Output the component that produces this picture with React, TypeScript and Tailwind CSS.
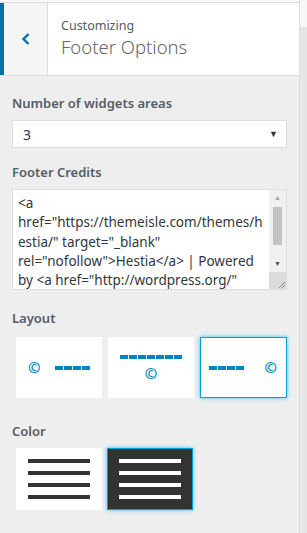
import React from 'react';

const font = { fontFamily: '"Segoe UI", "Noto Sans", "Open Sans", sans-serif' };

function Dashes({ count }: { count: number }) {
  return (
    <div className="flex gap-[1px]">
      {Array.from({ length: count }).map((_, i) => (
        <span key={i} className="block w-[8px] h-[4px] bg-[#0085ba]" />
      ))}
    </div>
  );
}

function Copy() {
  return <span className="text-[#0085ba] text-[15px] font-bold leading-none">©</span>;
}

function Bars({ light }: { light?: boolean }) {
  return (
    <div className="flex flex-col gap-[8px]">
      {[0, 1, 2, 3].map(i => (
        <span key={i} className={`block w-[62px] h-[4px] ${light ? 'bg-white' : 'bg-[#333]'}`} />
      ))}
    </div>
  );
}

const creditLines = [
  '<a',
  'href="https://themeisle.com/themes/h',
  'estia/" target="_blank"',
  'rel="nofollow">Hestia</a> | Powered',
  'by <a href="http://wordpress.org/"',
];

export default function App() {
  return (
    <div className="w-[307px] h-[533px] bg-[#eeeeee] flex overflow-hidden" style={font}>
      <div className="w-[299px] flex flex-col">
        {/* header */}
        <div className="h-[3px] bg-[#f9f9f9] border-b border-[#dddddd]" />
        <div className="h-[73px] flex border-b border-[#dddddd]">
          <div className="w-[4px] bg-[#0073aa]" />
          <div className="w-[44px] bg-[#f5f5f5] border-r border-[#dddddd] flex items-center justify-center">
            <svg width="10" height="14" viewBox="0 0 10 14">
              <path d="M7.5 2 L2.5 7 L7.5 12" fill="none" stroke="#0073aa" strokeWidth="2.4" />
            </svg>
          </div>
          <div className="flex-1 bg-white pl-[13px] pt-[15px]">
            <div className="text-[12.5px] leading-[16px] text-[#555d66]">Customizing</div>
            <div className="text-[18.5px] leading-[26px] font-light text-[#666]">Footer Options</div>
          </div>
        </div>

        <div className="px-[12px] pt-[17px]">
          <div className="text-[13px] font-semibold text-[#555d66] leading-[20px]">Number of widgets areas</div>
          <div className="mt-[7px] w-[275px] h-[28px] bg-white border border-[#dddddd] flex items-center justify-between pl-[10px] pr-[8px]">
            <span className="text-[14px] text-[#32373c]">3</span>
            <span className="text-[9px] text-[#333]">▼</span>
          </div>

          <div className="mt-[14px] text-[13px] font-semibold text-[#555d66] leading-[20px]">Footer Credits</div>
          <div className="mt-[7px] w-[275px] h-[101px] bg-white border border-[#dddddd] flex overflow-hidden">
            <div className="flex-1 pl-[5px] pt-[4px] text-[13.5px] leading-[19.3px] text-[#32373c] overflow-hidden">
              {creditLines.map((l, i) => (
                <div key={i} className="whitespace-pre">{l}</div>
              ))}
            </div>
            <div className="w-[17px] bg-[#f0f0f0] flex flex-col items-center">
              <span className="text-[7px] text-[#a3a3a3] mt-[4px] leading-none">▲</span>
              <span className="block w-[9px] h-[38px] bg-[#c1c1c1] mt-[6px]" />
              <span className="text-[7px] text-[#505050] mt-[15px] leading-none">▼</span>
              <span className="mt-auto w-[17px] h-[17px] bg-[#dcdcdc] flex items-end justify-end">
                <svg width="10" height="10" viewBox="0 0 10 10">
                  <path d="M9 3 L3 9 M9 6 L6 9" stroke="#808080" strokeWidth="1" />
                </svg>
              </span>
            </div>
          </div>

          <div className="mt-[18px] text-[13px] font-semibold text-[#555d66] leading-[20px]">Layout</div>
          <div className="mt-[9px] flex gap-[6px] pl-[4px]">
            <div className="w-[86px] h-[61px] bg-white flex items-center justify-between px-[12px]">
              <Copy />
              <Dashes count={4} />
            </div>
            <div className="w-[86px] h-[61px] bg-white flex flex-col items-center justify-center gap-[7px]">
              <Dashes count={7} />
              <Copy />
            </div>
            <div className="w-[87px] h-[61px] bg-white border border-[#00a0d2] shadow-[0_0_4px_#33c3f0] flex items-center justify-between pl-[8px] pr-[9px]">
              <Dashes count={4} />
              <Copy />
            </div>
          </div>

          <div className="mt-[23px] text-[13px] font-semibold text-[#555d66] leading-[20px]">Color</div>
          <div className="mt-[7px] flex gap-[5px] pl-[4px]">
            <div className="w-[86px] h-[62px] bg-white flex items-center justify-center">
              <Bars />
            </div>
            <div className="w-[86px] h-[62px] bg-[#333333] border border-[#00a0d2] shadow-[0_0_4px_#33c3f0] flex items-center justify-center">
              <Bars light />
            </div>
          </div>
        </div>
      </div>
      <div className="w-[8px] flex flex-col border-l border-[#dcdcdc]">
        <div className="h-[27px] bg-[#f7f7f7]" />
        <div className="flex-1 bg-[#e6e6e6]" />
      </div>
    </div>
  );
}
